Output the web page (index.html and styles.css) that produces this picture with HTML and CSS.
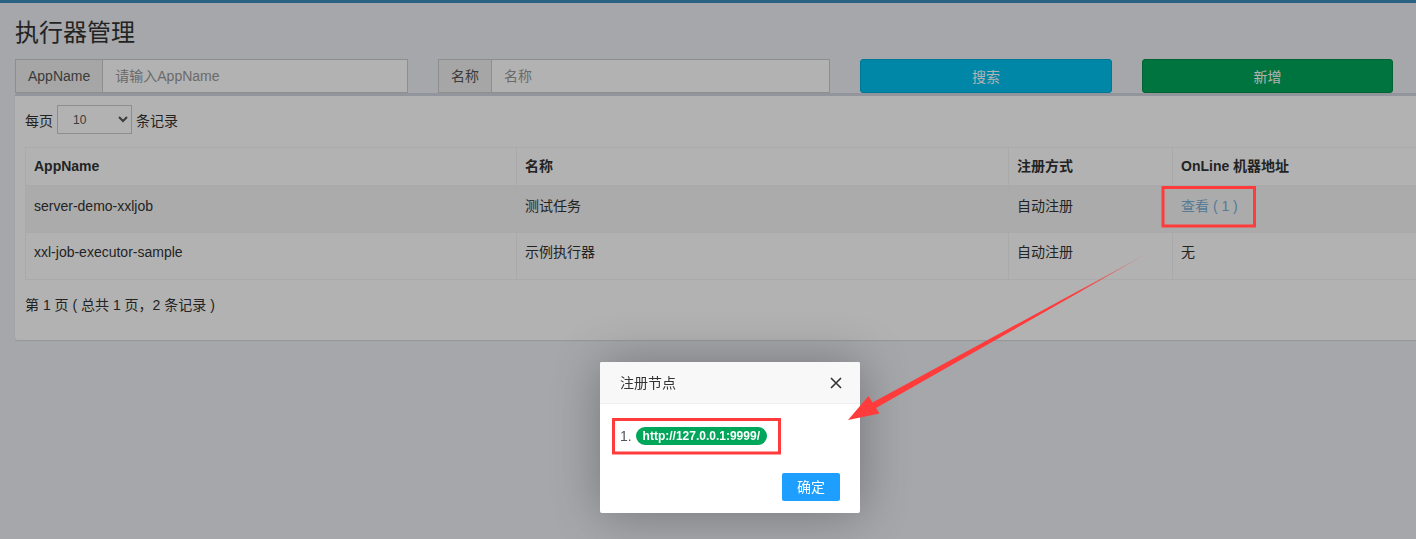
FILE: index.html
```html
<!DOCTYPE html>
<html lang="zh-CN">
<head>
  <meta charset="UTF-8" />
  <title>执行器管理</title>
  <link rel="stylesheet" href="styles.css">
</head>
<body>

  <!-- Top navbar strip -->
  <div class="topbar"></div>

  <section class="content-header">
    <h1>执行器管理</h1>
  </section>

  <section class="content">
    <!-- Filters -->
    <div class="filters">
      <div class="input-group">
        <span class="addon">AppName</span>
        <input type="text" placeholder="请输入AppName">
      </div>
      <div class="input-group narrow">
        <span class="addon">名称</span>
        <input type="text" placeholder="名称">
      </div>
      <button class="btn btn-info">搜索</button>
      <button class="btn btn-success">新增</button>
    </div>

    <!-- List box -->
    <div class="box">
      <div class="length">
        每页
        <select class="page-size">
          <option>10</option>
          <option>20</option>
          <option>50</option>
        </select>
        条记录
      </div>

      <table class="data-table">
        <colgroup>
          <col style="width: 491px">
          <col style="width: 492px">
          <col style="width: 164px">
          <col>
        </colgroup>
        <thead>
          <tr>
            <th>AppName</th>
            <th>名称</th>
            <th>注册方式</th>
            <th>OnLine 机器地址</th>
          </tr>
        </thead>
        <tbody>
          <tr class="hover">
            <td>server-demo-xxljob</td>
            <td>测试任务</td>
            <td>自动注册</td>
            <td><a href="#" class="show-registry">查看 ( 1 )</a></td>
          </tr>
          <tr>
            <td>xxl-job-executor-sample</td>
            <td>示例执行器</td>
            <td>自动注册</td>
            <td>无</td>
          </tr>
        </tbody>
      </table>

      <div class="info">第 1 页 ( 总共 1 页，2 条记录 )</div>
    </div>
  </section>

  <!-- Layer dialog -->
  <div class="shade"></div>
  <div class="layer">
    <div class="layer-title">
      注册节点
      <svg class="layer-close" width="12" height="12" viewBox="0 0 12 12">
        <path d="M1 1 L11 11 M11 1 L1 11" stroke="#333" stroke-width="1.6" fill="none"/>
      </svg>
    </div>
    <div class="layer-content">
      1. <span class="badge">http://127.0.0.1:9999/</span>
    </div>
    <div class="layer-btns">
      <a href="#" class="layer-btn">确定</a>
    </div>
  </div>

  <!-- Screenshot annotations -->
  <svg class="annot" width="1416" height="539" viewBox="0 0 1416 539">
    <defs>
      <linearGradient id="tail" gradientUnits="userSpaceOnUse" x1="1150" y1="252" x2="848" y2="420">
        <stop offset="0" stop-color="#ff3b3b" stop-opacity="0.2"/>
        <stop offset="0.25" stop-color="#ff3b3b" stop-opacity="1"/>
        <stop offset="1" stop-color="#ff3b3b" stop-opacity="1"/>
      </linearGradient>
    </defs>
    <rect x="1163" y="187.5" width="91.5" height="38.5" fill="none" stroke="#ff3b3b" stroke-width="3"/>
    <rect x="613.5" y="419.5" width="166" height="33.5" fill="none" stroke="#ff3b3b" stroke-width="3"/>
    <polygon fill="url(#tail)" points="1150,252 872.5,402.5 868.5,396 848,420 879.5,413.5 876,408"/>
  </svg>

</body>
</html>
```

FILE: styles.css
```css
/* Reset */
* {
  box-sizing: border-box;
}
html, body {
  margin: 0;
  padding: 0;
}
body {
  font-family: "Liberation Sans", "Noto Sans CJK SC", sans-serif;
  font-size: 14px;
  color: #333;
  background: #ecf0f5;
  width: 1416px;
  height: 539px;
  overflow: hidden;
  position: relative;
}

/* Navbar strip */
.topbar {
  height: 3px;
  background: #3c8dbc;
}

/* Header */
.content-header {
  padding: 15px 15px 0;
}
.content-header h1 {
  margin: 0;
  font-size: 24px;
  line-height: 30px;
  font-weight: normal;
  color: #333;
}

.content {
  padding: 11px 0 0 15px;
  width: 1700px;
}

/* Filters */
.filters {
  display: flex;
  gap: 30px;
  height: 34px;
}
.input-group {
  display: flex;
  width: 393px;
  height: 34px;
}
.input-group.narrow {
  width: 392px;
}
.addon {
  padding: 0 12px;
  line-height: 32px;
  background: #eee;
  border: 1px solid #ccc;
  border-right: none;
  color: #555;
  border-radius: 0;
}
.input-group input {
  flex: 1;
  min-width: 0;
  border: 1px solid #ccc;
  padding: 6px 12px;
  font: inherit;
  color: #555;
  background: #fff;
  outline: none;
}
.input-group input::placeholder {
  color: #999;
}
.btn {
  width: 252px;
  height: 34px;
  border: 1px solid transparent;
  border-radius: 3px;
  color: #fff;
  font: inherit;
  cursor: pointer;
}
.btn-success {
  width: 251px;
}
.btn-info {
  background: #00c0ef;
  border-color: #00acd6;
}
.btn-success {
  background: #00a65a;
  border-color: #008d4c;
}

/* Box */
.box {
  background: #fff;
  border-top: 3px solid #d2d6de;
  border-radius: 3px;
  box-shadow: 0 1px 1px rgba(0, 0, 0, 0.1);
  padding: 9px 10px 10px;
  height: 247px;
}
.length {
  display: flex;
  align-items: center;
  gap: 4px;
  height: 29px;
}
.page-size {
  width: 75px;
  height: 29px;
  font: 12px "Liberation Sans", sans-serif;
  color: #555;
  border: 1px solid #ccc;
  border-radius: 0;
  padding: 0 8px 0 11px;
  background: #fff;
}

/* Table */
.data-table {
  margin-top: 13px;
  width: 1665px;
  table-layout: fixed;
  border-collapse: collapse;
  border: 1px solid #f4f4f4;
}
.data-table th,
.data-table td {
  border: 1px solid #f4f4f4;
  padding: 8px;
  line-height: 20px;
  text-align: left;
  vertical-align: top;
}
.data-table th {
  font-weight: bold;
  height: 38px;
  border-bottom-width: 2px;
}
.data-table td {
  height: 47px;
  padding-top: 9px;
}
.data-table tr.hover td {
  background: #f5f5f5;
}
.show-registry {
  color: #7ab0d6;
  text-decoration: none;
}

.info {
  margin-top: 15px;
  line-height: 20px;
}

/* Layer dialog */
.shade {
  position: fixed;
  inset: 0;
  background: #000;
  opacity: 0.3;
  z-index: 100;
}
.layer {
  position: absolute;
  left: 600px;
  top: 362px;
  width: 260px;
  background: #fff;
  border-radius: 2px;
  box-shadow: 1px 1px 50px rgba(0, 0, 0, 0.3);
  z-index: 200;
}
.layer-title {
  position: relative;
  height: 42px;
  line-height: 42px;
  padding: 0 80px 0 20px;
  border-bottom: 1px solid #eee;
  background: #f8f8f8;
  border-radius: 2px 2px 0 0;
  color: #333;
}
.layer-close {
  position: absolute;
  right: 18px;
  top: 15px;
}
.layer-content {
  padding: 20px 20px 20px;
  line-height: 24px;
  color: #555;
}
.badge {
  display: inline-block;
  padding: 3px 7px;
  font-size: 12px;
  font-weight: bold;
  line-height: 1;
  color: #fff;
  background: #00a65a;
  border-radius: 10px;
  vertical-align: 1px;
}
.layer-btns {
  text-align: right;
  padding: 0 15px 12px;
}
.layer-btn {
  display: inline-block;
  height: 28px;
  line-height: 28px;
  padding: 0 15px;
  margin: 5px 5px 0;
  background: #1e9fff;
  color: #fff;
  border-radius: 2px;
  text-decoration: none;
}

/* Annotations */
.annot {
  position: absolute;
  top: 0;
  left: 0;
  z-index: 300;
  pointer-events: none;
}
```
